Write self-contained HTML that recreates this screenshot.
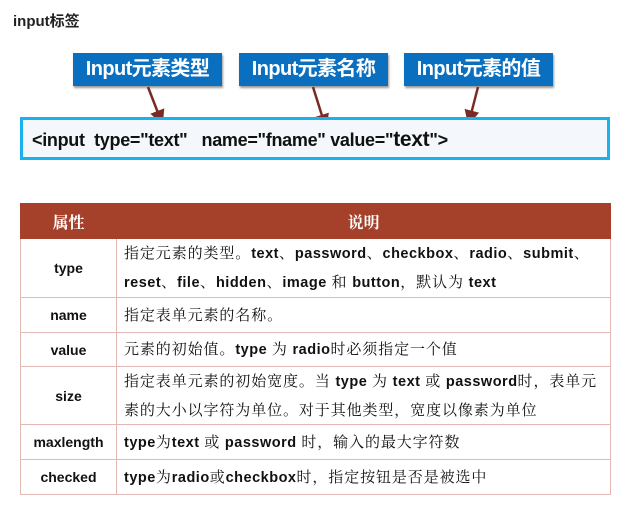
<!DOCTYPE html>
<html><head><meta charset="utf-8"><style>
body{margin:0;width:632px;height:514px;background:#fff;position:relative;overflow:hidden;font-family:"Liberation Sans","Noto Sans CJK SC",sans-serif}
.t{position:absolute;left:13px;top:10px;font-size:15px;font-weight:bold;color:#222}
.b{position:absolute;top:53px;height:33px;background:#0b6fc0;color:#fff;font-size:20px;font-weight:bold;line-height:33px;text-align:center;box-shadow:1px 2px 2px #999;letter-spacing:-0.6px}
.code{position:absolute;left:20px;top:117px;width:575px;height:37px;border:3px solid #1ab2ea;background:#f4f8fc;font-size:18px;font-weight:bold;line-height:40px;padding-left:9px;box-sizing:content-box;color:#111;letter-spacing:-0.3px}
table{position:absolute;left:20px;top:203px;width:591px;border-collapse:collapse;font-size:15px}
td,th{border:1px solid #e3b8b4;padding:0}
th{background:#a5402b;color:#fff;height:34px;font-family:"Noto Serif CJK SC",serif;font-size:16px;border-color:#a5402b}
td.a{width:95px;text-align:center;font-weight:bold;color:#111;font-size:14px}
td.d{padding-left:7px;font-family:"Noto Serif CJK SC",serif;color:#111;line-height:28px;white-space:nowrap;font-size:15px;letter-spacing:0.9px}
td.d b{font-family:"Liberation Sans",sans-serif;font-size:14.5px;letter-spacing:0.5px}
</style></head><body>
<div class="t">input标签</div>
<div class="b" style="left:73px;width:149px">Input元素类型</div>
<div class="b" style="left:239px;width:149px">Input元素名称</div>
<div class="b" style="left:404px;width:149px">Input元素的值</div>
<svg style="position:absolute;left:0;top:0" width="632" height="160">
<defs><marker id="m" markerWidth="6" markerHeight="6" refX="3" refY="3" orient="auto"><path d="M0,0L6,3L0,6z" fill="#7a2a24"/></marker></defs>
<g stroke="#7a2a24" stroke-width="2.5" marker-end="url(#m)">
<line x1="148" y1="87" x2="160" y2="118"/>
<line x1="313" y1="87" x2="324" y2="122"/>
<line x1="478" y1="87" x2="470" y2="118"/>
</g></svg>
<div class="code">&lt;input&nbsp; type="text"&nbsp;&nbsp; name="fname" value="<span style="font-size:21px">text</span>"&gt;</div>
<table>
<tr><th>属性</th><th>说明</th></tr>
<tr style="height:59px"><td class="a">type</td><td class="d">指定元素的类型。<b>text</b>、<b>password</b>、<b>checkbox</b>、<b>radio</b>、<b>submit</b>、<br><b>reset</b>、<b>file</b>、<b>hidden</b>、<b>image</b> 和 <b>button</b>，默认为 <b>text</b></td></tr>
<tr style="height:35px"><td class="a">name</td><td class="d">指定表单元素的名称。</td></tr>
<tr style="height:34px"><td class="a">value</td><td class="d">元素的初始值。<b>type</b> 为 <b>radio</b>时必须指定一个值</td></tr>
<tr style="height:58px"><td class="a">size</td><td class="d">指定表单元素的初始宽度。当 <b>type</b> 为 <b>text</b> 或 <b>password</b>时，表单元<br>素的大小以字符为单位。对于其他类型，宽度以像素为单位</td></tr>
<tr style="height:35px"><td class="a">maxlength</td><td class="d"><b>type</b>为<b>text</b> 或 <b>password</b> 时，输入的最大字符数</td></tr>
<tr style="height:35px"><td class="a">checked</td><td class="d"><b>type</b>为<b>radio</b>或<b>checkbox</b>时，指定按钮是否是被选中</td></tr>
</table>
</body></html>
